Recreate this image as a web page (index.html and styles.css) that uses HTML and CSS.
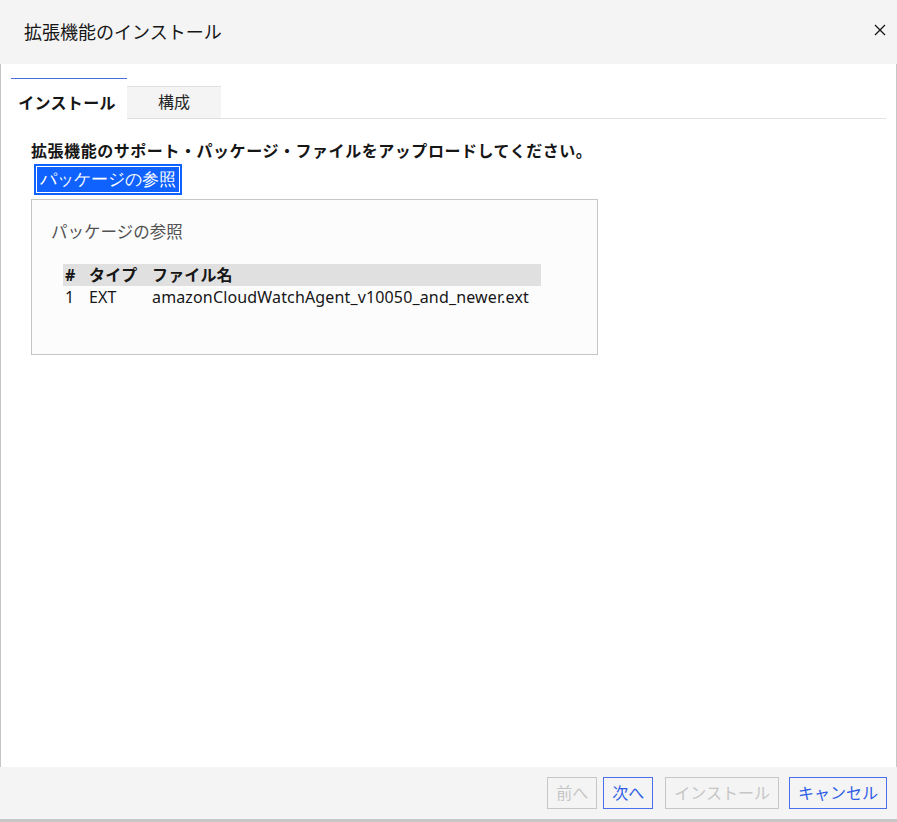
FILE: index.html
```html
<!DOCTYPE html>
<html lang="ja">
<head>
<meta charset="utf-8">
<title>拡張機能のインストール</title>
<link rel="stylesheet" href="styles.css">
</head>
<body>
<div class="dialog">
  <header class="header">
    <h1 class="title">拡張機能のインストール</h1>
    <button class="close" aria-label="閉じる">
      <svg width="12" height="12" viewBox="0 0 12 12"><path d="M1 1L11 11M11 1L1 11" stroke="#161616" stroke-width="1.3" fill="none"/></svg>
    </button>
  </header>
  <main class="body">
    <nav class="tabs">
      <div class="tab active">インストール</div>
      <div class="tab">構成</div>
      <div class="tab-rest"></div>
    </nav>
    <section class="content">
      <p class="instruction">拡張機能のサポート・パッケージ・ファイルをアップロードしてください。</p>
      <button class="browse"><span>パッケージの参照</span></button>
      <div class="panel">
        <div class="panel-label">パッケージの参照</div>
        <table class="files">
          <thead>
            <tr><th class="c1">#</th><th class="c2">タイプ</th><th class="c3">ファイル名</th></tr>
          </thead>
          <tbody>
            <tr><td class="c1">1</td><td class="c2">EXT</td><td class="c3">amazonCloudWatchAgent_v10050_and_newer.ext</td></tr>
          </tbody>
        </table>
      </div>
    </section>
  </main>
  <footer class="footer">
    <button class="btn disabled">前へ</button>
    <button class="btn primary">次へ</button>
    <button class="btn disabled gap">インストール</button>
    <button class="btn primary gap2">キャンセル</button>
  </footer>
</div>
</body>
</html>
```

FILE: styles.css
```css
* { box-sizing: border-box; }
html, body { margin: 0; padding: 0; }
body {
  width: 897px;
  height: 822px;
  font-family: "Noto Sans", "Noto Sans CJK JP", sans-serif;
  color: #161616;
  background: #ffffff;
  overflow: hidden;
}
.dialog {
  display: flex;
  flex-direction: column;
  height: 822px;
  border-bottom: 3px solid #c6c6c6;
}
.header {
  height: 64px;
  background: #f4f4f4;
  display: flex;
  align-items: center;
  justify-content: space-between;
  padding: 0 7px 0 24px;
}
.title {
  margin: 0;
  font-size: 18px;
  font-weight: 400;
  line-height: 24px;
  padding-bottom: 1px;
}
.close {
  border: 0;
  background: transparent;
  padding: 4px;
  display: flex;
  margin-top: -4px;
}
.body {
  flex: 1;
  border-left: 1px solid #c6c6c6;
  border-right: 1px solid #c6c6c6;
  padding: 14px 10px 0 10px;
}
.tabs {
  display: flex;
  align-items: flex-end;
  height: 41px;
}
.tab {
  font-size: 16px;
  line-height: 30px;
  height: 33px;
  text-align: center;
  border-bottom: 1px solid #e0e0e0;
}
.tab.active {
  width: 116px;
  height: 41px;
  line-height: 48px;
  font-weight: 700;
  letter-spacing: 0.3px;
  padding-right: 4px;
  border-top: 1px solid #4a6fd8;
  border-bottom: 1px solid transparent;
  background: #ffffff;
}
.tab:not(.active):not(.tab-rest) {
  width: 94px;
  background: #f4f4f4;
  border-top: 1px solid #e0e0e0;
  color: #262626;
}
.tab-rest {
  flex: 1;
  height: 1px;
  background: #e0e0e0;
}
.content {
  padding: 0 0 0 20px;
}
.instruction {
  margin: 22px 0 0 0;
  font-size: 16px;
  font-weight: 700;
  line-height: 20px;
  letter-spacing: 0.55px;
}
.browse {
  margin: 3px 0 0 3px;
  padding: 2px;
  background: #0f62fe;
  border: 0;
  display: block;
  height: 31px;
}
.browse span {
  display: block;
  border: 1px solid #ffffff;
  color: #ffffff;
  font-family: inherit;
  font-size: 17px;
  line-height: 25px;
  padding: 0 3px 0 3px;
}
.panel {
  margin-top: 4px;
  width: 567px;
  height: 156px;
  background: #fcfcfc;
  border: 1px solid #c6c6c6;
  padding: 20px 0 0 19px;
}
.panel-label {
  font-size: 16.5px;
  line-height: 24px;
  color: #525252;
}
.files {
  margin: 20px 0 0 12px;
  border-collapse: collapse;
  width: 478px;
  font-size: 16px;
  letter-spacing: 0.15px;
}
.files th {
  background: #e0e0e0;
  font-weight: 700;
  text-align: left;
  height: 22px;
  line-height: 22px;
  padding: 0;
}
.files td {
  height: 22px;
  line-height: 22px;
  padding: 0;
}
.files .c1 { width: 26px; padding-left: 2px; }
.files .c2 { width: 63px; }
.footer {
  height: 52px;
  background: #f4f4f4;
  display: flex;
  justify-content: flex-end;
  align-items: center;
  padding: 0 10px 0 0;
}
.btn {
  font-family: inherit;
  font-size: 16px;
  height: 32px;
  line-height: 28px;
  padding: 0 8px;
  background: transparent;
  margin-left: 6px;
  margin-top: -1px;
}
.btn.gap { margin-left: 12px; }
.btn.gap2 { margin-left: 10px; }
.btn.disabled {
  border: 1px solid #c6c6c6;
  color: #c6c6c6;
}
.btn.primary {
  border: 1px solid #4a6fe8;
  color: #2f5ee6;
}
```
